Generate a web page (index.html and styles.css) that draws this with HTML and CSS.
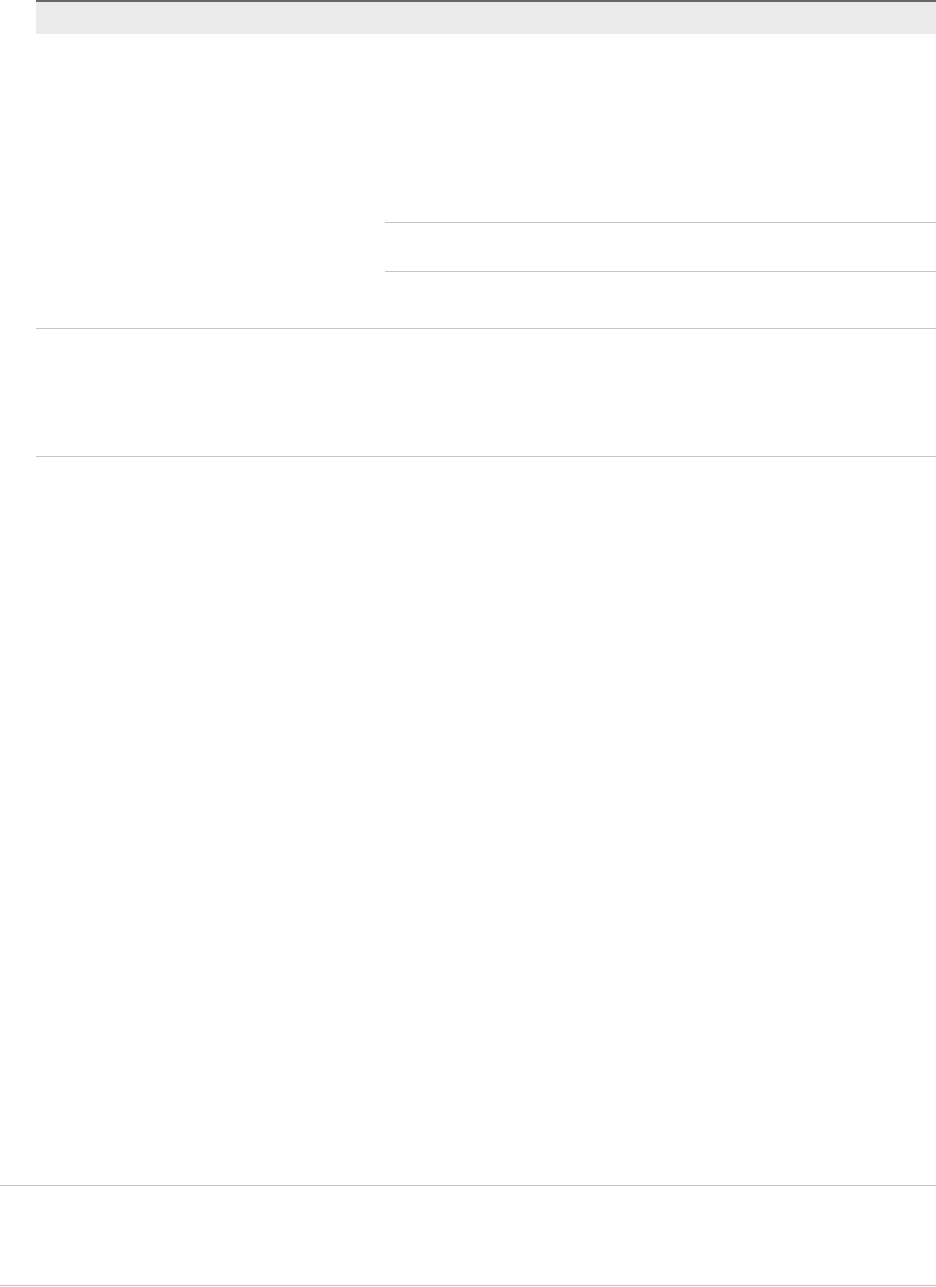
FILE: index.html
```
<!DOCTYPE html>
<html lang="en">
  <head>
    <meta charset="UTF-8" />
    <meta name="viewport" content="width=device-width, initial-scale=1.0" />
    <title>Table</title>
    <link rel="stylesheet" href="styles.css">
  </head>
  <body>
    <div class="table main-table">
      <div class="thead"></div>

      <div class="row first-row">
        <div class="cell left-cell"></div>
        <div class="cell right-cell">
          <div class="sub sub-top"></div>
          <div class="sub sub-mid"></div>
          <div class="sub sub-bottom"></div>
        </div>
      </div>

      <div class="row second-row"></div>
    </div>

    <div class="table footer-table">
      <div class="row footer-row"></div>
    </div>
  </body>
</html>
```

FILE: styles.css
```
body {
  font-family: "Liberation Sans", Arial, sans-serif;
  background-color: #ffffff;
  margin: 0;
  padding: 0;
}

.main-table {
  margin-left: 36px;
}

.thead {
  height: 32px;
  border-top: 2px solid #666666;
  background-color: #ebebeb;
}

.row {
  display: flex;
  border-bottom: 1px solid #c4c4c4;
}

.first-row {
  height: 294px;
}

.left-cell {
  width: 349px;
}

.right-cell {
  flex-grow: 1;
  display: flex;
  flex-direction: column;
}

.sub-top {
  height: 188px;
}

.sub-mid {
  height: 48px;
  border-top: 1px solid #c4c4c4;
}

.sub-bottom {
  height: 56px;
  border-top: 1px solid #c4c4c4;
}

.second-row {
  height: 127px;
}

.footer-table {
  margin-top: 728px;
  border-top: 1px solid #c4c4c4;
}

.footer-row {
  height: 99px;
}
```
